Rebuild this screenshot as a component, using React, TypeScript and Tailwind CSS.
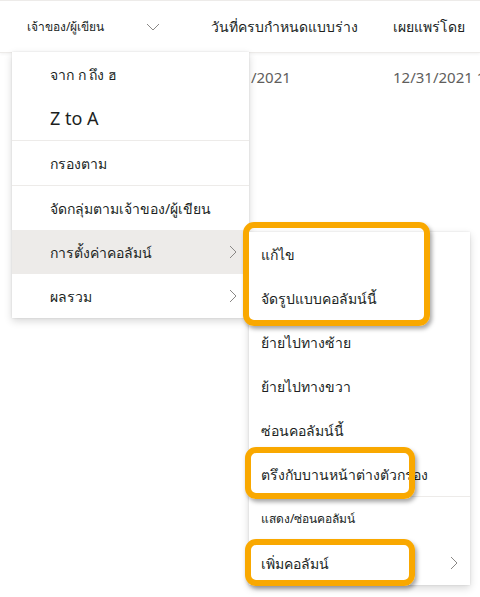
import React from 'react';

const font = { fontFamily: '"Noto Sans", "Segoe UI", Tahoma, sans-serif' };

const Chevron = ({ className = '' }: { className?: string }) => (
  <svg viewBox="0 0 8 14" className={className} fill="none" stroke="currentColor" strokeWidth="1">
    <path d="M1 1l6 6-6 6" />
  </svg>
);

const Item = ({
  label,
  size = 'text-[14px]',
  sub = false,
}: {
  label: string;
  size?: string;
  sub?: boolean;
}) => (
  <div className="h-11 flex items-center justify-between pr-3">
    <span className={`${size} text-[#201f1e] whitespace-nowrap`}>{label}</span>
    {sub && <Chevron className="w-2 h-[14px] text-[#8a8886]" />}
  </div>
);

export default function App() {
  return (
    <div className="relative w-[480px] h-[597px] bg-white overflow-hidden" style={font}>
      {/* header */}
      <div className="h-[53px] border-t border-[#edebe9] border-b flex items-center shadow-[0_1px_3px_rgba(0,0,0,0.06)]">
        <div className="w-[211px] shrink-0 pl-[27px] pr-[51px] flex items-center justify-between">
          <span className="text-[12px] text-[#201f1e] whitespace-nowrap">เจ้าของ/ผู้เขียน</span>
          <svg viewBox="0 0 14 8" className="w-[14px] h-2 text-[#8a8886]" fill="none" stroke="currentColor" strokeWidth="1">
            <path d="M1 1l6 6 6-6" />
          </svg>
        </div>
        <span className="w-[182px] shrink-0 text-[14px] text-[#201f1e] whitespace-nowrap">วันที่ครบกำหนดแบบร่าง</span>
        <span className="shrink-0 text-[14px] text-[#201f1e] whitespace-nowrap">เผยแพร่โดย</span>
      </div>

      {/* data row */}
      <div className="h-[48px] flex items-center">
        <span className="w-[182px] shrink-0 ml-[211px] text-[15px] text-[#605e5c]">12/31/2021</span>
        <span className="shrink-0 text-[15px] text-[#605e5c] whitespace-nowrap">12/31/2021 11:00</span>
      </div>

      {/* column menu */}
      <div className="absolute left-[12px] top-[52px] w-[237px] bg-white shadow-[0_3px_8px_rgba(0,0,0,0.16),0_0_2px_rgba(0,0,0,0.1)] z-10">
        <div className="pl-[38px]">
          <Item label="จาก ก ถึง ฮ" size="text-[14px]" />
          <Item label="Z to A" size="text-[18px]" />
        </div>
        <div className="border-t border-[#edebe9]" />
        <div className="pl-[38px]">
          <Item label="กรองตาม" />
        </div>
        <div className="border-t border-[#edebe9]" />
        <div className="pl-[38px]">
          <Item label="จัดกลุ่มตามเจ้าของ/ผู้เขียน" />
        </div>
        <div className="pl-[38px] bg-[#edebe9]">
          <Item label="การตั้งค่าคอลัมน์" sub />
        </div>
        <div className="pl-[38px]">
          <Item label="ผลรวม" sub />
        </div>
      </div>

      {/* submenu */}
      <div className="absolute left-[249px] top-[232px] w-[221px] bg-white shadow-[0_3px_8px_rgba(0,0,0,0.16),0_0_2px_rgba(0,0,0,0.1)] z-10">
        <div className="pl-3">
          <Item label="แก้ไข" />
          <Item label="จัดรูปแบบคอลัมน์นี้" />
          <Item label="ย้ายไปทางซ้าย" />
          <Item label="ย้ายไปทางขวา" />
          <Item label="ซ่อนคอลัมน์นี้" />
          <Item label="ตรึงกับบานหน้าต่างตัวกรอง" />
        </div>
        <div className="border-t border-[#edebe9]" />
        <div className="pl-3">
          <Item label="แสดง/ซ่อนคอลัมน์" size="text-[12px]" />
          <Item label="เพิ่มคอลัมน์" sub />
        </div>
      </div>

      {/* highlight callouts */}
      <div className="absolute left-[243px] top-[222px] w-[187px] h-[104px] border-[6px] border-[#f9a800] rounded-[11px] shadow-[2px_3px_4px_rgba(0,0,0,0.35)] z-20" />
      <div className="absolute left-[245px] top-[447px] w-[170px] h-[52px] border-[6px] border-[#f9a800] rounded-[11px] shadow-[2px_3px_4px_rgba(0,0,0,0.35)] z-20" />
      <div className="absolute left-[245px] top-[539px] w-[170px] h-[47px] border-[6px] border-[#f9a800] rounded-[11px] shadow-[2px_3px_4px_rgba(0,0,0,0.35)] z-20" />
    </div>
  );
}
